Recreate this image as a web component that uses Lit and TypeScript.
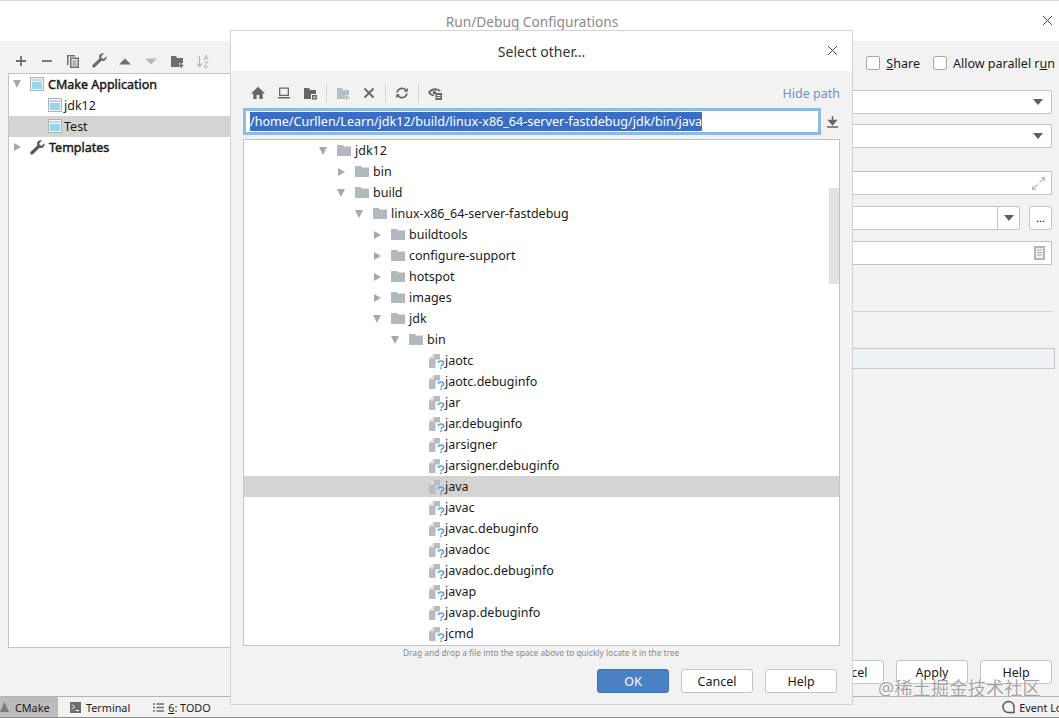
import { LitElement, css, html, svg } from 'lit'
import { customElement } from 'lit/decorators.js'

type Row = { name: string; depth: number; kind: 'open' | 'closed' | 'file'; selected?: boolean }

const rows: Row[] = [
  { name: 'jdk12', depth: 0, kind: 'open' },
  { name: 'bin', depth: 1, kind: 'closed' },
  { name: 'build', depth: 1, kind: 'open' },
  { name: 'linux-x86_64-server-fastdebug', depth: 2, kind: 'open' },
  { name: 'buildtools', depth: 3, kind: 'closed' },
  { name: 'configure-support', depth: 3, kind: 'closed' },
  { name: 'hotspot', depth: 3, kind: 'closed' },
  { name: 'images', depth: 3, kind: 'closed' },
  { name: 'jdk', depth: 3, kind: 'open' },
  { name: 'bin', depth: 4, kind: 'open' },
  { name: 'jaotc', depth: 5, kind: 'file' },
  { name: 'jaotc.debuginfo', depth: 5, kind: 'file' },
  { name: 'jar', depth: 5, kind: 'file' },
  { name: 'jar.debuginfo', depth: 5, kind: 'file' },
  { name: 'jarsigner', depth: 5, kind: 'file' },
  { name: 'jarsigner.debuginfo', depth: 5, kind: 'file' },
  { name: 'java', depth: 5, kind: 'file', selected: true },
  { name: 'javac', depth: 5, kind: 'file' },
  { name: 'javac.debuginfo', depth: 5, kind: 'file' },
  { name: 'javadoc', depth: 5, kind: 'file' },
  { name: 'javadoc.debuginfo', depth: 5, kind: 'file' },
  { name: 'javap', depth: 5, kind: 'file' },
  { name: 'javap.debuginfo', depth: 5, kind: 'file' },
  { name: 'jcmd', depth: 5, kind: 'file' },
]

const icon = (w: number, h: number, body: unknown) =>
  html`<svg width=${w} height=${h} viewBox="0 0 ${w} ${h}">${body}</svg>`

const arrowDown = () => icon(12, 10, svg`<path d="M2 1h8L6 9z" fill="#a8a8a8"/>`)
const arrowRight = () => icon(10, 12, svg`<path d="M2 2l7 4-7 4z" fill="#a8a8a8"/>`)
const folder = () =>
  icon(14, 11, svg`<path d="M0 0h6l1 1.500h7V11H0z" fill="#b3b8bc"/>`)
const fileIcon = () =>
  icon(16, 16, svg`
    <path d="M0 5.500L5 1h6v5.500H6.500V15H0z" fill="#b8bcc0"/>
    <path d="M0 5.500h5V1z" fill="#dedede"/>
    <path d="M9.300 10c0-2.800 5.400-2.800 5.400 0 0 1.800-2.700 1.600-2.700 3.500" fill="none" stroke="#45a7dc" stroke-width="1.500"/>
    <rect x="11.200" y="14.400" width="1.600" height="1.600" fill="#45a7dc"/>`)
const configIcon = () =>
  icon(14, 14, svg`
    <rect x=".5" y=".5" width="13" height="13" fill="#f2f5f8" stroke="#a9b3bc"/>
    <rect x="2" y="5" width="10" height="7" fill="#96d6ea"/>
    <path d="M1.500 3h11" stroke="#aab2b9"/>`)
const wrench = (color: string) =>
  icon(15, 15, svg`<path d="M14.500 3.200l-2.700 2.500-2-.5-.5-2L12 .6C9.700-.3 7 1.200 7 4c0 .6.100 1 .3 1.500L.8 11.800c-.8.900-.6 1.700 0 2.400.7.600 1.500.7 2.300-.1l6.400-6.400c2.700.9 5.800-1.300 5-4.500z" fill=${color}/>`)

const tb = {
  plus: svg`<path d="M7 2v10M2 7h10" stroke="#6e6e6e" stroke-width="1.800"/>`,
  minus: svg`<path d="M2 7h10" stroke="#6e6e6e" stroke-width="1.800"/>`,
  copy: svg`<path d="M1 1h8v1.500H2.500V11H1z" fill="#6e6e6e"/><path d="M4 3.500h9V14H4z" fill="#6e6e6e"/><path d="M5.500 5h6v7.500h-6z" fill="#f2f2f2"/><path d="M6.500 7h4M6.500 9h4M6.500 11h4" stroke="#6e6e6e"/>`,
  up: svg`<path d="M1 10.500L7 4.500l6 6z" fill="#6e6e6e"/>`,
  down: svg`<path d="M1 4.500h12l-6 6z" fill="#b8b8b8"/>`,
  folderPlus: svg`<path d="M1 2h5l1 2h6v5H9v4H1z" fill="#6e6e6e"/><path d="M11 9v5M8.500 11.500h5" stroke="#6e6e6e" stroke-width="1.500"/>`,
  sort: svg`<path d="M3.500 2v10M1 9.500l2.500 3 2.500-3" fill="none" stroke="#b8b8b8" stroke-width="1.300"/><path d="M8 6l2-5 2 5M9 4.500h2M8 8h4L8 13h4" fill="none" stroke="#b8b8b8"/>`,
  home: svg`<path d="M7 .8L0 7.500h2.300V13h3.300V9h2.800v4h3.300V7.500H14z" fill="#666"/>`,
  monitor: svg`<path d="M2 1.500h10v8.500H2zM3.300 2.800v5.900h7.400V2.800zM1 11h12v1.600H1z" fill="#666" fill-rule="evenodd"/>`,
  folderBox: svg`<path d="M1 2h5l1 2h6v4H8v5H1z" fill="#666"/><path d="M9 9h5v4.500H9zM10.500 10.500v1.500h2v-1.500z" fill="#666" fill-rule="evenodd"/>`,
  folderPlusOff: svg`<path d="M1 2h5l1 2h6v5H9v4H1z" fill="#b9bdc0"/><path d="M11 9v5M8.500 11.500h5" stroke="#b9bdc0" stroke-width="1.500"/>`,
  cross: svg`<path d="M2.500 2.500l9 9M11.500 2.500l-9 9" stroke="#666" stroke-width="1.800"/>`,
  refresh: svg`<path d="M2 6.500C2.500 3.500 6 1.500 9 2.800c.8.300 1.500.9 2 1.500M12 7.500c-.5 3-4 5-7 3.700-.8-.3-1.500-.9-2-1.500" fill="none" stroke="#666" stroke-width="1.700"/><path d="M12.800 1.800v4h-4zM1.200 12.200v-4h4z" fill="#666"/>`,
  eye: svg`<path d="M0 6.500C2 1.500 9.500.5 13 5l-2 .5C8.500 3.500 5 3.800 2.300 6.500c.8 1 1.700 1.700 3.700 2v1.800C3 10 1.200 8.500 0 6.500z" fill="#666"/><circle cx="6.500" cy="6.500" r="1.800" fill="#666"/><path d="M7.500 7H14v7H7.500z" fill="#666"/><path d="M9 9.500h3.500M9 11.500h3.500" stroke="#f2f2f2"/>`,
}

const tool = (body: unknown) => icon(14, 14, body)

@customElement('app-root')
export class AppRoot extends LitElement {
  render() {
    return html`
      <div class="window">
        <header class="title-bar">
          <span class="title">Run/Debug Configurations</span>
          <span class="close">${this.closeIcon()}</span>
        </header>

        <main class="main">
          ${this.renderLeft()} ${this.renderRight()}
        </main>

        <footer class="status">
          <div class="tab active">
            ${icon(9, 10, svg`<path d="M4.500 0L9 10H0z" fill="#7b7b7b"/>`)}
            <span>CMake</span>
          </div>
          <div class="tab terminal">
            ${icon(11, 11, svg`<path d="M0 0h11v11H0z" fill="#6e6e6e"/><path d="M2 2.500L4.500 5 2 7.500M5.500 8.500h3.500" fill="none" stroke="#fff"/>`)}
            <span>Terminal</span>
          </div>
          <div class="tab todo">
            ${icon(11, 9, svg`<path d="M0 1h2M0 4.500h2M0 8h2M3.500 1H11M3.500 4.500H11M3.500 8H11" stroke="#6e6e6e" stroke-width="1.300"/>`)}
            <span><u>6</u>: TODO</span>
          </div>
          <div class="event-log">
            ${icon(13, 14, svg`<path d="M12 12.500H6.500a5.500 5.500 0 1 1 5.500-5.500z" fill="none" stroke="#555" stroke-width="1.400"/>`)}
            <span>Event Log</span>
          </div>
        </footer>

        ${this.renderDialog()}

        <div class="watermark">@稀土掘金技术社区</div>
      </div>
    `
  }

  closeIcon() {
    return icon(11, 11, svg`<path d="M1 1l9 9M10 1l-9 9" stroke="#444" stroke-width="1"/>`)
  }

  renderLeft() {
    return html`
      <section class="left">
        <div class="left-tools">
          <span class="tool">${tool(tb.plus)}</span>
          <span class="tool">${tool(tb.minus)}</span>
          <span class="tool">${tool(tb.copy)}</span>
          <span class="tool">${wrench('#6e6e6e')}</span>
          <span class="tool">${tool(tb.up)}</span>
          <span class="tool">${tool(tb.down)}</span>
          <span class="tool">${tool(tb.folderPlus)}</span>
          <span class="tool">${tool(tb.sort)}</span>
        </div>
        <div class="config-tree">
          <div class="config-row bold">
            <span class="config-arrow">${arrowDown()}</span>${configIcon()}<span>CMake Application</span>
          </div>
          <div class="config-row child">${configIcon()}<span>jdk12</span></div>
          <div class="config-row child picked">${configIcon()}<span>Test</span></div>
          <div class="config-row bold">
            <span class="config-arrow">${arrowRight()}</span>${wrench('#555')}<span>Templates</span>
          </div>
        </div>
      </section>
    `
  }

  renderRight() {
    return html`
      <section class="right">
        <div class="options">
          <label class="check"><span class="box"></span><span class="check-text"><u>S</u>hare</span></label>
          <label class="check"><span class="box"></span><span class="check-text">Allow parallel r<u>u</u>n</span></label>
        </div>

        <div class="field"><span class="caret"></span></div>
        <div class="field gap-xs"><span class="caret"></span></div>
        <div class="field plain gap-l">
          ${icon(13, 13, svg`<path d="M7.500 5.500L12.500.5M9 .5h3.500V4M5.500 7.500l-5 5M.5 9v3.500H4" fill="none" stroke="#bdbdbd" stroke-width="1.300"/>`)}
        </div>
        <div class="combo-row gap-s">
          <div class="field combo"><span class="combo-btn"><span class="caret"></span></span></div>
          <button class="dots">...</button>
        </div>
        <div class="field plain gap-s">
          ${icon(11, 14, svg`<path d="M0 0h11v14H0z" fill="#b5b5b5"/><path d="M2 2h7v10H2z" fill="#f2f2f2"/><path d="M3 4h5M3 6.500h5M3 9h5" stroke="#a5a5a5"/>`)}
        </div>
        <div class="rule"></div>
        <div class="blue-field"></div>

        <div class="actions">
          <button class="btn">Cancel</button>
          <button class="btn">Apply</button>
          <button class="btn">Help</button>
        </div>
      </section>
    `
  }

  renderDialog() {
    return html`
      <div class="dialog">
        <div class="dialog-head">
          <span class="dialog-title">Select other...</span>
          <span class="dialog-close">${this.closeIcon()}</span>
        </div>
        <div class="dialog-body">
          <div class="dialog-tools">
            <span class="tool">${tool(tb.home)}</span>
            <span class="tool">${tool(tb.monitor)}</span>
            <span class="tool">${tool(tb.folderBox)}</span>
            <span class="sep"></span>
            <span class="tool">${tool(tb.folderPlusOff)}</span>
            <span class="tool">${tool(tb.cross)}</span>
            <span class="sep"></span>
            <span class="tool">${tool(tb.refresh)}</span>
            <span class="sep"></span>
            <span class="tool">${tool(tb.eye)}</span>
            <span class="hide-path">Hide path</span>
          </div>

          <div class="path-row">
            <div class="path-input">
              <span class="selection">/home/Curllen/Learn/jdk12/build/linux-x86_64-server-fastdebug/jdk/bin/java</span>
            </div>
            <span class="download">
              ${icon(13, 13, svg`<path d="M6.500 0v6M3 4.500h7L6.500 8.500zM1 11h11" fill="#666" stroke="#666" stroke-width="1.500"/>`)}
            </span>
          </div>

          <div class="tree">
            ${rows.map((row) => this.renderRow(row))}
            <div class="thumb"></div>
          </div>

          <div class="hint">Drag and drop a file into the space above to quickly locate it in the tree</div>

          <div class="dialog-actions">
            <button class="btn primary">OK</button>
            <button class="btn">Cancel</button>
            <button class="btn">Help</button>
          </div>
        </div>
      </div>
    `
  }

  renderRow(row: Row) {
    const left = 72 + row.depth * 18
    return html`
      <div class="row ${row.selected ? 'selected' : ''}" style="padding-left:${left}px">
        <span class="arrow">
          ${row.kind === 'open' ? arrowDown() : row.kind === 'closed' ? arrowRight() : ''}
        </span>
        ${row.kind === 'file'
          ? html`<span class="file-icon">${fileIcon()}</span>`
          : folder()}
        <span class=${row.kind === 'file' ? 'name file' : 'name'}>${row.name}</span>
      </div>
    `
  }

  static styles = css`
    :host {
      display: block;
      width: 1059px;
      height: 718px;
      overflow: hidden;
      font-family: 'Noto Sans', sans-serif;
      font-size: 12.5px;
      color: #1a1a1a;
    }

    .window {
      position: relative;
      display: flex;
      flex-direction: column;
      height: 718px;
      border-top: 1px solid #dcdcdc;
      box-sizing: border-box;
      background: #f2f2f2;
    }

    svg {
      display: block;
      flex: none;
    }

    .title-bar {
      position: relative;
      display: flex;
      align-items: center;
      justify-content: center;
      height: 40px;
      flex: none;
      background: #fff;
      padding-left: 5px;
      box-sizing: border-box;
    }

    .title {
      font-size: 13.7px;
      color: #8a8a8a;
    }

    .close {
      position: absolute;
      right: 6px;
      top: 14px;
    }

    .main {
      display: flex;
      flex: 1;
      min-height: 0;
    }

    /* left column with the configuration tree */
    .left {
      display: flex;
      flex-direction: column;
      width: 230px;
      flex: none;
      padding: 7px 0 48px 8px;
      box-sizing: border-box;
    }

    .left-tools {
      display: flex;
      height: 25px;
      align-items: center;
    }

    .tool {
      display: flex;
      justify-content: center;
      align-items: center;
      width: 26px;
    }

    .config-tree {
      flex: 1;
      background: #fff;
      border: 1px solid #c4c4c4;
      border-right: none;
    }

    .config-row {
      display: flex;
      align-items: center;
      height: 21px;
      line-height: 19px;
      padding-bottom: 1px;
      box-sizing: border-box;
    }

    .config-row.child {
      padding-left: 39px;
      gap: 2px;
    }

    .config-row.bold {
      padding-left: 17px;
      gap: 4px;
      -webkit-text-stroke: 0.45px #1a1a1a;
    }

    .config-row.picked {
      background: #d4d4d4;
    }

    .config-arrow {
      margin-left: -19px;
      width: 19px;
      display: flex;
      justify-content: center;
      margin-right: -4px;
      padding-right: 4px;
    }

    /* right column, mostly hidden behind the dialog */
    .right {
      position: relative;
      display: flex;
      flex-direction: column;
      flex: 1;
      padding: 14px 7px 12px 20px;
      box-sizing: border-box;
    }

    .options {
      display: flex;
      justify-content: flex-end;
      gap: 13px;
      height: 16px;
      margin-right: -3px;
      margin-bottom: 19px;
    }

    .check {
      display: flex;
      align-items: center;
      gap: 6px;
      line-height: 16px;
    }

    .check-text {
      padding-top: 2px;
    }

    .box {
      width: 12px;
      height: 12px;
      background: #fff;
      border: 1px solid #a8a8a8;
      border-radius: 2px;
    }

    .field {
      display: flex;
      align-items: center;
      justify-content: flex-end;
      height: 24px;
      flex: none;
      box-sizing: border-box;
      background: #fff;
      border: 1px solid #c4c4c4;
      border-radius: 2px;
      padding-right: 8px;
    }

    .gap-xs {
      margin-top: 10px;
    }

    .gap-s {
      margin-top: 11px;
    }

    .gap-l {
      margin-top: 23px;
    }

    .field.plain {
      border-radius: 0;
      padding-right: 6px;
    }

    .caret {
      width: 0;
      height: 0;
      border-left: 5px solid transparent;
      border-right: 5px solid transparent;
      border-top: 6px solid #5f5f5f;
    }

    .combo-row {
      display: flex;
      gap: 9px;
    }

    .combo {
      flex: 1;
      padding-right: 0;
    }

    .combo-btn {
      display: flex;
      align-items: center;
      justify-content: center;
      align-self: stretch;
      width: 21px;
      border-left: 1px solid #c4c4c4;
    }

    .dots {
      width: 23px;
      height: 24px;
      padding: 0 0 1px;
      background: #fff;
      border: 1px solid #c4c4c4;
      border-radius: 3px;
      font: 11px 'Noto Sans', sans-serif;
    }

    .rule {
      height: 1px;
      flex: none;
      margin-top: 46px;
      background: #d2d2d2;
    }

    .blue-field {
      height: 21px;
      flex: none;
      box-sizing: border-box;
      margin: 36px -3px 0 0;
      background: #eef2f7;
      border: 1px solid #c8c8c8;
    }

    .actions {
      display: flex;
      justify-content: flex-end;
      gap: 12px;
      margin-top: auto;
    }

    .btn {
      width: 72px;
      height: 24px;
      padding: 0;
      box-sizing: border-box;
      background: #fff;
      border: 1px solid #c4c4c4;
      border-radius: 3px;
      color: #1a1a1a;
      font: 12.5px 'Noto Sans', sans-serif;
    }

    .btn.primary {
      background: #4a80c4;
      border-color: #3f70ad;
      color: #e6edf7;
      font-weight: 500;
    }

    /* status strip */
    .status {
      position: relative;
      display: flex;
      align-items: center;
      height: 22px;
      flex: none;
      box-sizing: border-box;
      border-top: 1px solid #b4b4b4;
      border-bottom: 1px solid #8c8c8c;
      font-size: 10.8px;
    }

    .tab {
      display: flex;
      align-items: center;
      height: 100%;
    }

    .tab.active {
      width: 58px;
      gap: 6px;
      background: #bcbcbc;
    }

    .tab.terminal {
      gap: 5px;
      margin-left: 12px;
    }

    .tab.todo {
      gap: 4px;
      margin-left: 23px;
    }

    .event-log {
      display: flex;
      align-items: center;
      gap: 4px;
      margin-left: auto;
      margin-right: -10px;
    }

    /* file chooser dialog */
    .dialog {
      position: absolute;
      left: 230px;
      top: 29px;
      display: flex;
      flex-direction: column;
      width: 623px;
      height: 675px;
      box-sizing: border-box;
      background: #f2f2f2;
      border: 1px solid #d4d4d4;
    }

    .dialog-head {
      position: relative;
      display: flex;
      align-items: center;
      justify-content: center;
      flex: none;
      height: 40px;
      background: #fff;
    }

    .dialog-title {
      font-size: 14px;
      color: #333;
    }

    .dialog-close {
      position: absolute;
      right: 14px;
      top: 14px;
    }

    .dialog-body {
      display: flex;
      flex-direction: column;
      flex: 1;
      min-height: 0;
      padding: 9px 12px 0;
    }

    .dialog-tools {
      display: flex;
      align-items: center;
      height: 26px;
      flex: none;
      margin-bottom: 2px;
      padding-left: 2px;
    }

    .sep {
      width: 1px;
      height: 19px;
      background: #d6d6d6;
      margin: 0 3px;
    }

    .hide-path {
      margin-left: auto;
      color: #6f93c8;
    }

    .path-row {
      display: flex;
      align-items: center;
      flex: none;
      height: 27px;
    }

    .path-input {
      display: flex;
      align-items: center;
      width: 578px;
      height: 27px;
      box-sizing: border-box;
      background: #fff;
      border: 3px solid #8db9e6;
      padding-left: 4px;
      font-size: 12.55px;
      white-space: nowrap;
    }

    .selection {
      background: #3a6ec4;
      color: #fff;
      line-height: 19px;
    }

    .download {
      display: flex;
      margin: 2px 0 0 5px;
    }

    .tree {
      position: relative;
      flex: none;
      height: 507px;
      box-sizing: border-box;
      margin-top: 4px;
      background: #fff;
      border: 1px solid #c4c4c4;
      overflow: hidden;
    }

    .row {
      display: flex;
      align-items: center;
      height: 21px;
      box-sizing: border-box;
    }

    .row.selected {
      background: #d4d4d4;
    }

    .arrow {
      display: flex;
      justify-content: center;
      width: 14px;
      margin-right: 7px;
    }

    .file-icon {
      margin-left: 2px;
    }

    .name {
      margin-left: 4px;
      line-height: 19px;
    }

    .name.file {
      margin-left: 0;
    }

    .thumb {
      position: absolute;
      right: 0;
      top: 48px;
      width: 10px;
      height: 96px;
      background: #e2e2e2;
    }

    .hint {
      flex: none;
      height: 23px;
      padding-left: 160px;
      font-size: 8.35px;
      line-height: 13px;
      color: #8a8a8a;
    }

    .dialog-actions {
      display: flex;
      justify-content: flex-end;
      gap: 12px;
      padding-right: 3px;
    }

    .watermark {
      position: absolute;
      left: 878px;
      top: 673px;
      font-family: 'Noto Sans', 'Noto Sans CJK SC', sans-serif;
      font-size: 18px;
      letter-spacing: 0.3px;
      color: rgba(125, 125, 125, 0.7);
      text-shadow: 0 0 2px rgba(255, 255, 255, 0.9);
      white-space: nowrap;
    }
  `
}
